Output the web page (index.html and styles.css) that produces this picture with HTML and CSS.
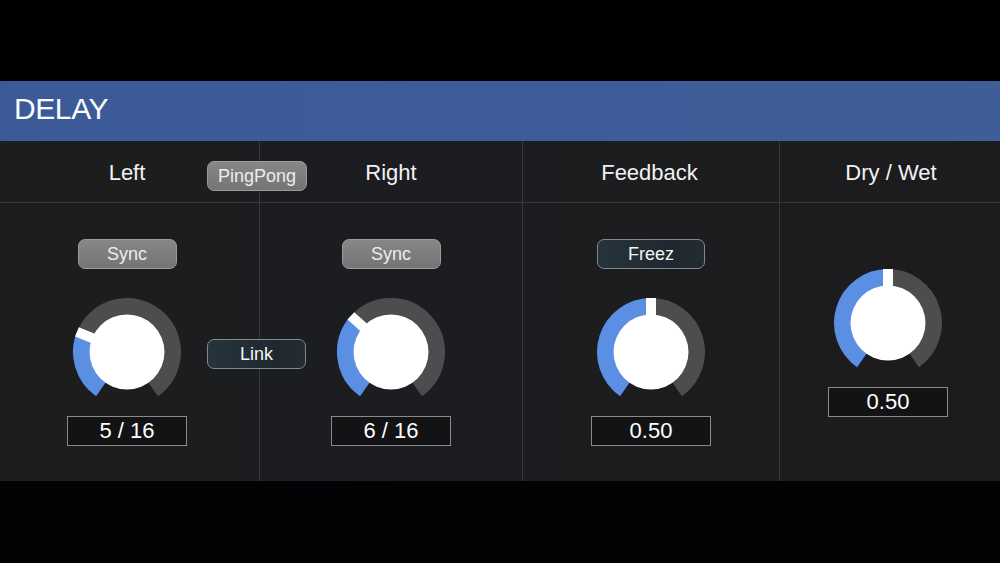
FILE: index.html
```html
<!DOCTYPE html>
<html>
<head>
<meta charset="utf-8">
<link rel="stylesheet" href="styles.css">
</head>
<body>
<div class="screen">
  <div class="topbar"></div>
  <div class="header"><span class="title">DELAY</span></div>
  <div class="panel">
    <div class="col col-left">
      <div class="head">Left</div>
      <div class="body">
        <div class="btn btn-grey">Sync</div>
        <svg class="knob" viewBox="0 0 110 110" width="110" height="110">
          <path class="arc-on" d="M29.19 91.86 A45 45 0 0 1 13.28 38.14"/>
          <path class="arc-off" d="M13.28 38.14 A45 45 0 1 1 80.81 91.86"/>
          <rect class="ptr" x="50" y="1" width="10" height="22" transform="rotate(-68 55 55)"/>
          <circle class="cap" cx="55" cy="55" r="37.5"/>
        </svg>
        <div class="value">5 / 16</div>
      </div>
    </div>
    <div class="col col-right">
      <div class="head">Right</div>
      <div class="body">
        <div class="btn btn-grey">Sync</div>
        <svg class="knob" viewBox="0 0 110 110" width="110" height="110">
          <path class="arc-on" d="M29.19 91.86 A45 45 0 0 1 21.56 24.89"/>
          <path class="arc-off" d="M21.56 24.89 A45 45 0 1 1 80.81 91.86"/>
          <rect class="ptr" x="50" y="1" width="10" height="22" transform="rotate(-48 55 55)"/>
          <circle class="cap" cx="55" cy="55" r="37.5"/>
        </svg>
        <div class="value">6 / 16</div>
      </div>
    </div>
    <div class="col col-fb">
      <div class="head">Feedback</div>
      <div class="body">
        <div class="btn btn-dark btn-wide">Freez</div>
        <svg class="knob" viewBox="0 0 110 110" width="110" height="110">
          <path class="arc-on" d="M29.19 91.86 A45 45 0 0 1 55 10"/>
          <path class="arc-off" d="M55 10 A45 45 0 0 1 80.81 91.86"/>
          <rect class="ptr" x="50" y="1" width="10" height="22"/>
          <circle class="cap" cx="55" cy="55" r="37.5"/>
        </svg>
        <div class="value">0.50</div>
      </div>
    </div>
    <div class="col col-dw">
      <div class="head">Dry / Wet</div>
      <div class="body">
        <svg class="knob" viewBox="0 0 110 110" width="110" height="110">
          <path class="arc-on" d="M29.19 91.86 A45 45 0 0 1 55 10"/>
          <path class="arc-off" d="M55 10 A45 45 0 0 1 80.81 91.86"/>
          <rect class="ptr" x="50" y="1" width="10" height="22"/>
          <circle class="cap" cx="55" cy="55" r="37.5"/>
        </svg>
        <div class="value">0.50</div>
      </div>
    </div>
    <div class="btn btn-grey float-pingpong">PingPong</div>
    <div class="btn btn-dark float-link">Link</div>
  </div>
  <div class="bottombar"></div>
</div>
</body>
</html>
```
FILE: styles.css
```css
* { box-sizing: border-box; }
html, body {
  margin: 0;
  padding: 0;
  background: #000;
  width: 1000px;
  height: 563px;
  overflow: hidden;
  font-family: "Liberation Sans", Arial, Helvetica, sans-serif;
}
.screen {
  display: flex;
  flex-direction: column;
  width: 1000px;
  height: 563px;
}
.topbar { height: 81px; background: #000; flex: none; }
.bottombar { flex: 1; background: #020204; }
.header {
  height: 60px;
  flex: none;
  background: linear-gradient(to right, #3b5a97, #3d5c99 60%, #3f5e98);
  display: flex;
  align-items: center;
  padding-left: 14px;
  padding-bottom: 4px;
}
.title {
  color: #fbfbfd;
  font-size: 30px;
  letter-spacing: -0.4px;
}
.panel {
  position: relative;
  height: 340px;
  flex: none;
  display: grid;
  grid-template-columns: 259px 263px 257px 221px;
  background: linear-gradient(to right, #1d1d1c, #1c1d20 30%, #1c1c1e);
}
.col {
  display: flex;
  flex-direction: column;
  min-width: 0;
}
.col + .col { border-left: 1px solid #38383b; }
.col-left .head, .col-left .body { padding-right: 5px; }
.col-dw .body { padding-right: 4px; }
.head {
  height: 62px;
  flex: none;
  border-bottom: 1px solid #38383b;
  display: flex;
  align-items: center;
  justify-content: center;
  color: #f2f2f2;
  font-size: 22px;
  padding-top: 2px;
}
.col-fb .head { padding-right: 3px; }
.col-dw .head { padding-left: 2px; }
.body {
  flex: 1;
  display: flex;
  flex-direction: column;
  align-items: center;
  justify-content: center;
  padding-top: 1px;
}
.btn {
  width: 99px;
  height: 30px;
  border-radius: 7px;
  display: flex;
  align-items: center;
  justify-content: center;
  font-size: 18px;
  flex: none;
}
.btn-grey {
  background: linear-gradient(#878787, #747474);
  border: 1px solid #9b9b9b;
  color: #ededed;
}
.btn-dark {
  background: linear-gradient(to right, #27343c, #1f282e 70%, #232c31);
  border: 1.5px solid #7f8a8c;
  color: #f4f4f4;
}
.btn-wide { width: 108px; }
.knob {
  display: block;
  flex: none;
  margin-top: 28px;
}
.col-dw .knob { margin-top: 0; }
.arc-on, .arc-off {
  fill: none;
  stroke-width: 18;
}
.arc-on { stroke: #5b8fe4; }
.arc-off { stroke: #4e4c4f; }
.ptr, .cap { fill: #ffffff; }
.value {
  margin-top: 9px;
  width: 120px;
  height: 30px;
  flex: none;
  background: #131315;
  border: 1.5px solid #8a8a8a;
  color: #ffffff;
  font-size: 22px;
  display: flex;
  align-items: center;
  justify-content: center;
}
.float-pingpong {
  position: absolute;
  left: 207px;
  top: 20px;
  width: 100px;
}
.float-link {
  position: absolute;
  left: 207px;
  top: 198px;
}
```
